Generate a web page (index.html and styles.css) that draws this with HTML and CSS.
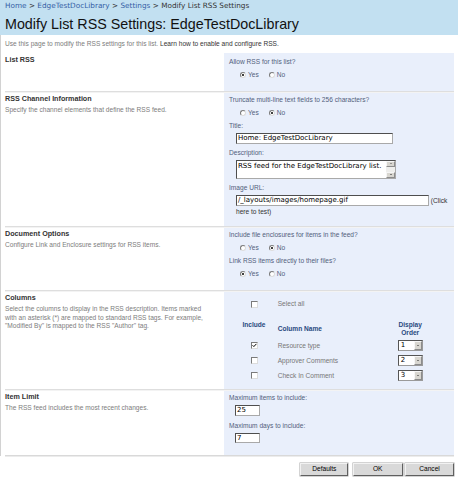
FILE: index.html
```html
<!DOCTYPE html>
<html>
<head>
<meta charset="utf-8">
<link rel="stylesheet" href="styles.css">
</head>
<body>
<div class="header">
  <div class="crumbs"><a class="crumb">Home</a> &gt; <a class="crumb">EdgeTestDocLibrary</a> &gt; <a class="crumb">Settings</a> &gt; <span class="cur">Modify List RSS Settings</span></div>
  <h1 class="title">Modify List RSS Settings: EdgeTestDocLibrary</h1>
</div>
<div class="main">
  <p class="intro">Use this page to modify the RSS settings for this list. <a class="learn">Learn how to enable and configure RSS.</a></p>

  <div class="sections">
    <div class="sec sec1">
      <div class="left first">
        <div class="shead">List RSS</div>
      </div>
      <div class="right first">
        <div class="label">Allow RSS for this list?</div>
        <div class="radios">
          <span class="opt"><span class="radio on"></span>Yes</span>
          <span class="opt"><span class="radio"></span>No</span>
        </div>
      </div>
    </div>
    <div class="sep"></div>

    <div class="sec sec2">
      <div class="left">
        <div class="shead">RSS Channel Information</div>
        <div class="sdesc">Specify the channel elements that define the RSS feed.</div>
      </div>
      <div class="right">
        <div class="label">Truncate multi-line text fields to 256 characters?</div>
        <div class="radios">
          <span class="opt"><span class="radio"></span>Yes</span>
          <span class="opt"><span class="radio on"></span>No</span>
        </div>
        <div class="label gap4">Title:</div>
        <div class="field"><span class="tbox w-title">Home: EdgeTestDocLibrary</span></div>
        <div class="label gap5">Description:</div>
        <div class="field">
          <div class="tarea">
            <span class="tarea-text">RSS feed for the EdgeTestDocLibrary list.</span>
            <span class="vscroll">
              <span class="sbtn"><span class="tri up"></span></span>
              <span class="strack"></span>
              <span class="sbtn"><span class="tri down"></span></span>
            </span>
          </div>
        </div>
        <div class="label gap5">Image URL:</div>
        <div class="field urlrow"><span class="tbox w-url">/_layouts/images/homepage.gif</span> <span class="clk">(Click</span> <span class="clk">here to test)</span></div>
      </div>
    </div>
    <div class="sep"></div>

    <div class="sec sec3">
      <div class="left">
        <div class="shead">Document Options</div>
        <div class="sdesc">Configure Link and Enclosure settings for RSS items.</div>
      </div>
      <div class="right">
        <div class="label">Include file enclosures for items in the feed?</div>
        <div class="radios">
          <span class="opt"><span class="radio"></span>Yes</span>
          <span class="opt"><span class="radio on"></span>No</span>
        </div>
        <div class="label gap4">Link RSS items directly to their files?</div>
        <div class="radios">
          <span class="opt"><span class="radio on"></span>Yes</span>
          <span class="opt"><span class="radio"></span>No</span>
        </div>
      </div>
    </div>
    <div class="sep"></div>

    <div class="sec sec4">
      <div class="left">
        <div class="shead">Columns</div>
        <div class="sdesc multi">Select the columns to display in the RSS description. Items marked with an asterisk (*) are mapped to standard RSS tags. For example, "Modified By" is mapped to the RSS "Author" tag.</div>
      </div>
      <div class="right cols">
        <div class="ctable">
          <div class="crow selall">
            <span class="cc"><span class="cbox"></span></span>
            <span class="cname">Select all</span>
            <span></span>
          </div>
          <div class="crow chead">
            <span class="cc th top">Include</span>
            <span class="cname th">Column Name</span>
            <span class="th order">Display<br>Order</span>
          </div>
          <div class="crow item">
            <span class="cc"><span class="cbox on"><svg viewBox="0 0 7 7" width="5" height="5"><path d="M0.8 3.2 L2.6 5 L6.2 1.2" fill="none" stroke="#000" stroke-width="1.4"/></svg></span></span>
            <span class="cname">Resource type</span>
            <span class="sel"><span class="selv">1</span><span class="selb"><span class="tri down"></span></span></span>
          </div>
          <div class="crow item">
            <span class="cc"><span class="cbox"></span></span>
            <span class="cname">Approver Comments</span>
            <span class="sel"><span class="selv">2</span><span class="selb"><span class="tri down"></span></span></span>
          </div>
          <div class="crow item">
            <span class="cc"><span class="cbox"></span></span>
            <span class="cname">Check In Comment</span>
            <span class="sel"><span class="selv">3</span><span class="selb"><span class="tri down"></span></span></span>
          </div>
        </div>
      </div>
    </div>
    <div class="sep"></div>

    <div class="sec sec5">
      <div class="left">
        <div class="shead">Item Limit</div>
        <div class="sdesc">The RSS feed includes the most recent changes.</div>
      </div>
      <div class="right">
        <div class="label">Maximum items to include:</div>
        <div class="field small"><span class="tbox w-num">25</span></div>
        <div class="label gap6">Maximum days to include:</div>
        <div class="field small"><span class="tbox w-num">7</span></div>
      </div>
    </div>
  </div>
  <div class="bottomline"></div>
  <div class="buttons">
    <span class="btn b-def">Defaults</span>
    <span class="btn b-ok">OK</span>
    <span class="btn b-cancel">Cancel</span>
  </div>
</div>
</body>
</html>
```

FILE: styles.css
```css
html, body {
  margin: 0;
  padding: 0;
  background: #ffffff;
}
body {
  width: 458px;
  height: 480px;
  overflow: hidden;
  font-family: "Liberation Sans", Arial, sans-serif;
  font-size: 6.6px;
  color: #333;
}

/* header */
.header {
  background: #c2e0f1;
  height: 35px;
  box-sizing: border-box;
  padding: 2px 0 0 5px;
}
.crumbs {
  font-family: "DejaVu Sans", Verdana, sans-serif;
  font-size: 7.3px;
  line-height: 8px;
  color: #333;
  white-space: nowrap;
}
.crumb { color: #3660a6; text-decoration: none; }
.cur { color: #333; }
.title {
  margin: 6px 0 0 0;
  font-family: "Liberation Sans", Arial, sans-serif;
  font-weight: normal;
  font-size: 14.3px;
  line-height: 16px;
  color: #111;
}

/* main */
.main {
  border-left: 1px solid #d2d2d2;
  padding: 5px 0 0 4px;
  height: 421px;
  box-sizing: border-box;
}
.intro {
  margin: 0;
  line-height: 8px;
  color: #7d7d7d;
}
.learn { color: #333; text-decoration: none; }

.sections {
  margin-top: 5px;
  width: 449px;
}
.sec {
  display: grid;
  grid-template-columns: 219px 230px;
}
.sec1 { height: 38px; }
.sec2 { height: 133px; }
.sec3 { height: 62px; }
.sec4 { height: 97px; }
.sec5 { height: 64px; }

.sep {
  height: 2px;
  background: linear-gradient(#dedede 0 1px, #f3f3f3 1px 2px);
}

.left {
  padding: 1.5px 12px 0 0;
}
.left.first { padding-top: 3px; }
.shead {
  font-weight: bold;
  font-size: 7.2px;
  line-height: 8px;
  color: #333;
}
.sdesc {
  margin-top: 3.5px;
  line-height: 8px;
  color: #7d7d7d;
}
.sdesc.multi { line-height: 8.5px; }

.right {
  background: #e9effb;
  padding: 3px 0 0 5px;
  display: flex;
  flex-direction: column;
  align-items: flex-start;
  color: #52607c;
}
.right.first { padding-top: 5px; }
.label {
  line-height: 8px;
  height: 8px;
  white-space: nowrap;
}
.gap4 { margin-top: 4px; }
.gap5 { margin-top: 5px; }
.gap6 { margin-top: 6px; }

.radios {
  margin-top: 4px;
  height: 10px;
  display: flex;
  align-items: center;
  padding-left: 11px;
}
.opt {
  display: flex;
  align-items: center;
  margin-right: 10px;
  line-height: 8px;
}
.radio {
  width: 6px;
  height: 6px;
  box-sizing: border-box;
  border-radius: 50%;
  border: 1px solid;
  border-color: #7a7a7a #dcdcdc #dcdcdc #7a7a7a;
  background: #fff;
  margin-right: 2px;
  position: relative;
}
.radio.on::after {
  content: "";
  position: absolute;
  left: 1px;
  top: 1px;
  width: 2px;
  height: 2px;
  border-radius: 50%;
  background: #000;
}

/* text fields */
.field {
  margin-top: 3px;
  padding-left: 7px;
}
.field.small { padding-left: 6px; }
.tbox {
  display: inline-block;
  box-sizing: border-box;
  height: 10.5px;
  border: 1px solid;
  border-color: #4e4e4e #a9a9a9 #a9a9a9 #4e4e4e;
  background: #fff;
  font-family: "DejaVu Sans", Verdana, sans-serif;
  font-size: 7px;
  line-height: 8.5px;
  padding-left: 1px;
  color: #000;
  vertical-align: top;
  white-space: nowrap;
  overflow: hidden;
}
.w-title { width: 157px; }
.w-url { width: 193px; height: 11px; }
.w-num { width: 25px; height: 10.5px; }

.urlrow {
  width: 218px;
  line-height: 11px;
  color: #333;
}
.clk { white-space: nowrap; }

.tarea {
  width: 160px;
  height: 19px;
  box-sizing: border-box;
  border: 1px solid;
  border-color: #4e4e4e #a9a9a9 #a9a9a9 #4e4e4e;
  background: #fff;
  display: flex;
}
.tarea-text {
  flex: 1;
  font-family: "DejaVu Sans", Verdana, sans-serif;
  font-size: 7px;
  line-height: 9px;
  padding: 1px 0 0 1px;
  color: #000;
  white-space: nowrap;
  overflow: hidden;
}
.vscroll {
  width: 9px;
  display: flex;
  flex-direction: column;
  background: #eeeeec;
}
.sbtn {
  height: 6px;
  box-sizing: border-box;
  background: #d8d6d0;
  border: 1px solid;
  border-color: #f6f6f6 #8c8c8c #8c8c8c #f6f6f6;
  display: flex;
  align-items: center;
  justify-content: center;
}
.strack { flex: 1; }
.tri {
  width: 0;
  height: 0;
  border-left: 1.5px solid transparent;
  border-right: 1.5px solid transparent;
}
.tri.up { border-bottom: 1.5px solid #555; }
.tri.down { border-top: 1.5px solid #222; }

/* columns table */
.right.cols { padding-top: 7px; padding-left: 15px; }
.ctable {
  display: flex;
  flex-direction: column;
}
.crow {
  display: grid;
  grid-template-columns: 30px 128.7px 25px;
  align-items: center;
}
.crow.selall { height: 10px; }
.crow.chead { height: 15px; margin-top: 12px; margin-bottom: 2px; }
.crow.item { height: 15px; }
.cc {
  display: flex;
  justify-content: center;
}
.cname {
  padding-left: 8.7px;
  color: #777;
  line-height: 8px;
  white-space: nowrap;
}
.th {
  font-weight: bold;
  color: #2a4a80;
  line-height: 7.5px;
}
.th.top { align-self: start; }
.th.order { text-align: center; }
.cbox {
  width: 7px;
  height: 7px;
  box-sizing: border-box;
  border: 1px solid;
  border-color: #7a7a7a #dcdcdc #dcdcdc #7a7a7a;
  background: #fff;
  display: flex;
  align-items: center;
  justify-content: center;
}
.sel {
  width: 25px;
  height: 10.5px;
  box-sizing: border-box;
  border: 1px solid;
  border-color: #555 #9a9a9a #9a9a9a #555;
  background: #fff;
  display: flex;
}
.selv {
  flex: 1;
  font-family: "DejaVu Sans", Verdana, sans-serif;
  font-size: 7px;
  line-height: 8.5px;
  padding-left: 2px;
  color: #000;
}
.selb {
  width: 8px;
  box-sizing: border-box;
  background: #d8d6d0;
  border: 1px solid;
  border-color: #f6f6f6 #8c8c8c #8c8c8c #f6f6f6;
  display: flex;
  align-items: center;
  justify-content: center;
}

/* bottom */
.bottomline {
  width: 449px;
  height: 2px;
  background: linear-gradient(#d9d9d9 0 1px, #ececec 1px 2px);
}
.buttons {
  width: 449px;
  margin-top: 5.7px;
  display: flex;
  justify-content: flex-end;
}
.btn {
  height: 13.3px;
  box-sizing: border-box;
  background: #d9d9d9;
  border: 1px solid;
  border-color: #f2f2f2 #5f5f5f #5f5f5f #f2f2f2;
  box-shadow: 0 0 0 0.5px #a7a7a7;
  color: #000;
  display: flex;
  align-items: center;
  justify-content: center;
  line-height: 8px;
}
.b-def { width: 48px; }
.b-ok { width: 50px; margin-left: 4.4px; }
.b-cancel { width: 49px; margin-left: 2.3px; }
```
